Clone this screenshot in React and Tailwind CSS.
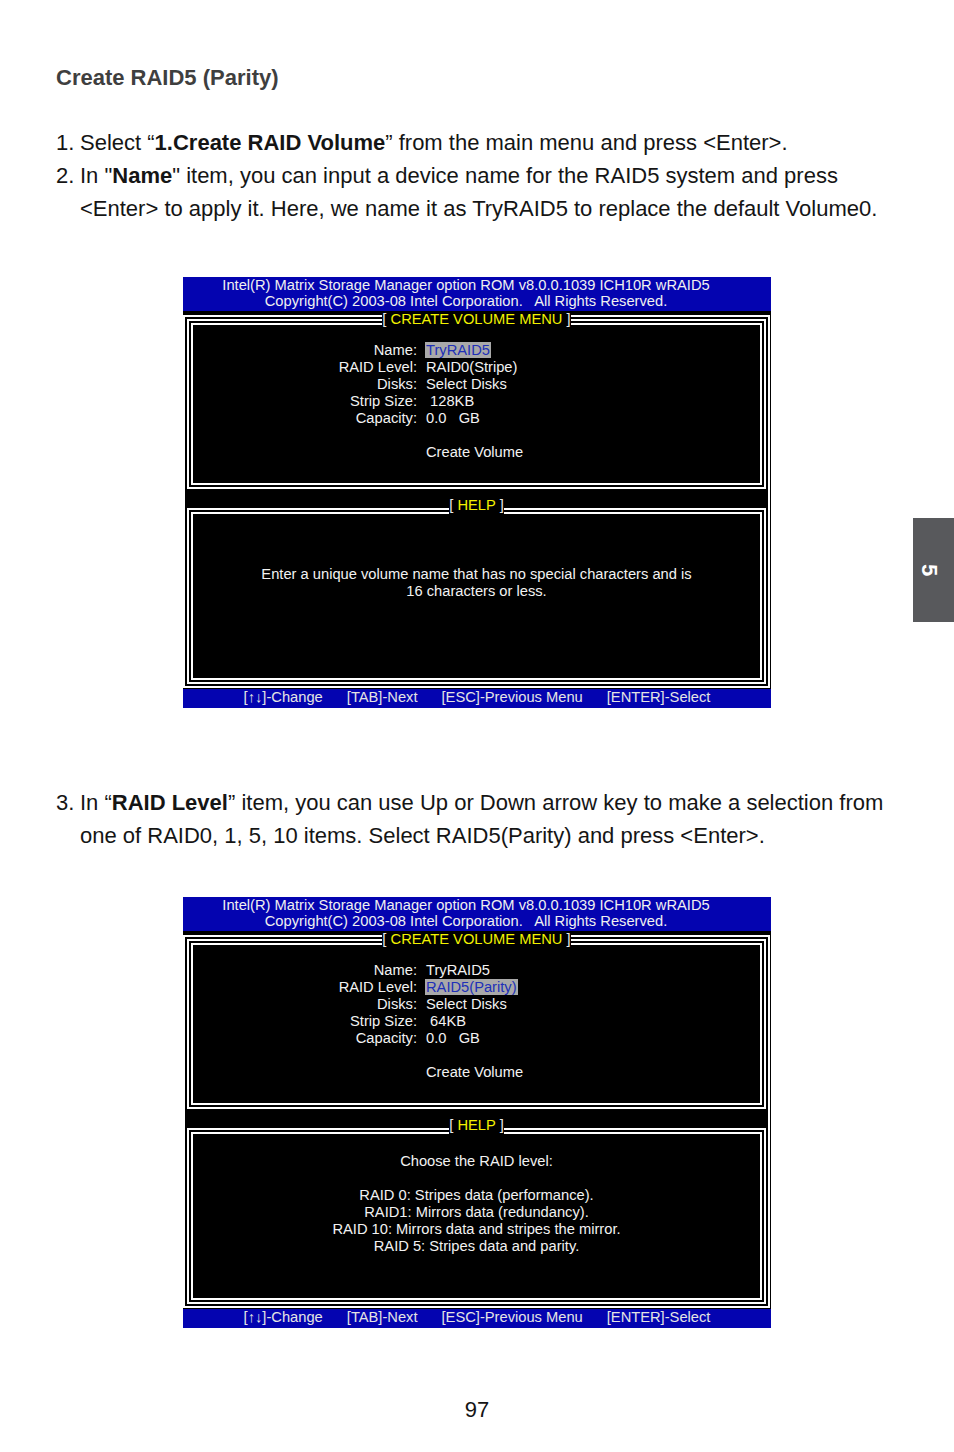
import React from "react";

const Box = ({ h, title, titleTop, children }) => (
  <div className={`relative border-2 border-white p-[2px] ${h}`}>
    <div className="h-full border-2 border-white">{children}</div>
    <div className={`absolute left-0 right-0 flex justify-center ${titleTop}`}>
      <span className="bg-black whitespace-pre text-[#e8e8e8]">
        {"[ "}
        <span className="text-[#f2f200]">{title}</span>
        {" ]"}
      </span>
    </div>
  </div>
);

const Row = ({ label, value, hl }) => (
  <div className="flex h-[17px]">
    <div className="w-[224px] text-right">{label}</div>
    <div className="ml-[9px] whitespace-pre">
      {hl ? (
        <span className="-ml-[1px] px-[1px] bg-[#a9a9a9] text-[#2030b8]">{value}</span>
      ) : (
        value
      )}
    </div>
  </div>
);

const Screen = ({ rows, help, helpPt }) => (
  <div className="ml-[183px] w-[588px] h-[431px] bg-black text-[14.7px] leading-[17px] text-[#f2f2f2]">
    <div className="h-[34px] bg-[#0404b0] text-center pr-[22px] leading-[16px] whitespace-pre text-[#f0f0f0]">
      <div>Intel(R) Matrix Storage Manager option ROM v8.0.0.1039 ICH10R wRAID5</div>
      <div>Copyright(C) 2003-08 Intel Corporation.   All Rights Reserved.</div>
    </div>
    <div className="h-[378px] pt-[4px] pr-[1px]">
      <div className="h-[373px] border-2 border-white p-[2px] flex flex-col">
        <Box h="h-[170px]" title="CREATE VOLUME MENU" titleTop="top-[-10px]">
          <div className="pt-[17px]">
            {rows.map((r, i) => (
              <Row key={i} {...r} />
            ))}
            <div className="h-[17px]" />
            <Row label="" value="Create Volume" />
          </div>
        </Box>
        <div className="h-[19px] shrink-0" />
        <Box h="h-[176px]" title="HELP" titleTop="top-[-13px]">
          <div className={`text-center ${helpPt}`}>
            {help.map((l, i) => (
              <div key={i} className="h-[17px] whitespace-pre">
                {l}
              </div>
            ))}
          </div>
        </Box>
      </div>
    </div>
    <div className="h-[19px] bg-[#0404b0] flex justify-center gap-[24px] leading-[17px] text-[#e4e4e4] whitespace-pre">
      <span>[↑↓]-Change</span>
      <span>[TAB]-Next</span>
      <span>[ESC]-Previous Menu</span>
      <span>[ENTER]-Select</span>
    </div>
  </div>
);

export default function App() {
  return (
    <div className="relative w-[954px] h-[1452px] bg-white overflow-hidden font-['Liberation_Sans',Arial,sans-serif]">
      <div className="pt-[65px] pl-[56px]">
        <h1 className="text-[22px] leading-[26px] font-bold text-[#3f3f3f]">Create RAID5 (Parity)</h1>
        <div className="mt-[35px] text-[22px] leading-[33px] text-[#151515] whitespace-nowrap">
          <div className="flex">
            <span className="w-[24px] shrink-0">1.</span>
            <span>
              Select “<b>1.Create RAID Volume</b>” from the main menu and press &lt;Enter&gt;.
            </span>
          </div>
          <div className="flex">
            <span className="w-[24px] shrink-0">2.</span>
            <span>
              In "<b>Name</b>" item, you can input a device name for the RAID5 system and press
              <br />
              &lt;Enter&gt; to apply it. Here, we name it as TryRAID5 to replace the default Volume0.
            </span>
          </div>
        </div>
      </div>

      <div className="mt-[52px]">
        <Screen
          rows={[
            { label: "Name:", value: "TryRAID5", hl: true },
            { label: "RAID Level:", value: "RAID0(Stripe)" },
            { label: "Disks:", value: "Select Disks" },
            { label: "Strip Size:", value: " 128KB" },
            { label: "Capacity:", value: "0.0   GB" },
          ]}
          help={[
            "Enter a unique volume name that has no special characters and is",
            "16 characters or less.",
          ]}
          helpPt="pt-[52px]"
        />
      </div>

      <div className="mt-[78px] pl-[56px] text-[22px] leading-[33px] text-[#151515] whitespace-nowrap">
        <div className="flex">
          <span className="w-[24px] shrink-0">3.</span>
          <span>
            In “<b>RAID Level</b>” item, you can use Up or Down arrow key to make a selection from
            <br />
            one of RAID0, 1, 5, 10 items. Select RAID5(Parity) and press &lt;Enter&gt;.
          </span>
        </div>
      </div>

      <div className="mt-[45px]">
        <Screen
          rows={[
            { label: "Name:", value: "TryRAID5" },
            { label: "RAID Level:", value: "RAID5(Parity)", hl: true },
            { label: "Disks:", value: "Select Disks" },
            { label: "Strip Size:", value: " 64KB" },
            { label: "Capacity:", value: "0.0   GB" },
          ]}
          help={[
            "Choose the RAID level:",
            "",
            "RAID 0: Stripes data (performance).",
            "RAID1: Mirrors data (redundancy).",
            "RAID 10: Mirrors data and stripes the mirror.",
            "RAID 5: Stripes data and parity.",
          ]}
          helpPt="pt-[19px]"
        />
      </div>

      <div className="mt-[69px] text-center text-[22px] leading-[26px] text-[#151515]">97</div>

      <div className="absolute left-[913px] top-[518px] w-[41px] h-[104px] bg-[#58595c] flex items-center justify-center">
        <span className="rotate-90 text-white font-bold text-[22px] leading-none -ml-[8px]">5</span>
      </div>
    </div>
  );
}
